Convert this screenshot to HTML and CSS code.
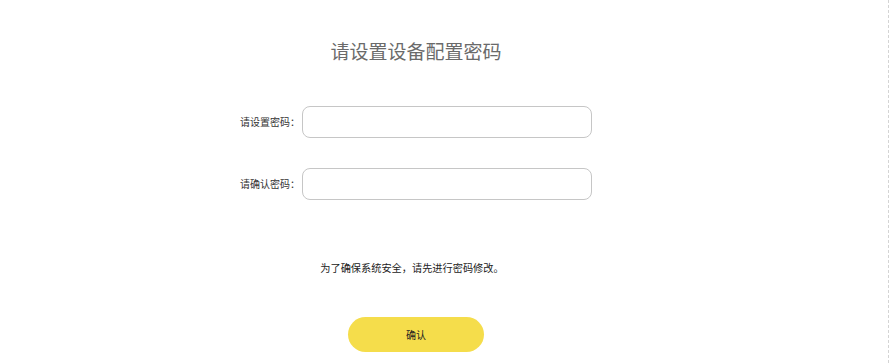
FILE: index.html
```html
<!DOCTYPE html>
<html lang="zh-CN">
<head>
<meta charset="utf-8">
<title>请设置设备配置密码</title>
<link rel="stylesheet" href="styles.css">
</head>
<body>
<div class="page">
  <main class="main">
    <h1 class="title">请设置设备配置密码</h1>
    <form class="form">
      <div class="row">
        <label class="label" for="pwd">请设置密码：</label>
        <input class="input" id="pwd" type="password">
      </div>
      <div class="row">
        <label class="label" for="pwd2">请确认密码：</label>
        <input class="input" id="pwd2" type="password">
      </div>
      <p class="note">为了确保系统安全，请先进行密码修改。</p>
      <button class="btn" type="button">确认</button>
    </form>
  </main>
  <div class="rail"></div>
</div>
</body>
</html>
```
FILE: styles.css
```css
* { box-sizing: border-box; }
html, body { margin: 0; padding: 0; background: #fff; }
body {
  font-family: "Noto Sans CJK SC", "Microsoft YaHei", sans-serif;
  color: #333;
}
.page {
  display: flex;
  justify-content: space-between;
  height: 363px;
}
.main {
  flex: 0 0 832px;
  display: flex;
  flex-direction: column;
  align-items: center;
  padding-top: 39px;
}
.rail {
  flex: 0 0 6px;
  border-left: 1px dashed #d4d4d4;
}
.title {
  margin: 0;
  font-size: 19px;
  line-height: 24px;
  font-weight: normal;
  color: #6a6a6a;
}
.form {
  margin-top: 43px;
  display: flex;
  flex-direction: column;
  align-items: center;
}
.row {
  display: flex;
  align-items: center;
  gap: 2px;
  margin-bottom: 30px;
}
.row:last-of-type { margin-bottom: 0; }
.label {
  font-size: 10px;
  line-height: 14px;
  color: #333;
}
.input {
  width: 290px;
  height: 32px;
  border: 1px solid #c6c6c6;
  border-radius: 8px;
  background: #fff;
  outline: none;
  padding: 0 8px;
}
.note {
  margin: 61px 0 0;
  font-size: 10.2px;
  line-height: 14px;
  color: #222;
  transform: translateX(-4px);
}
.btn {
  margin-top: 42px;
  width: 136px;
  height: 35px;
  border: none;
  border-radius: 18px;
  background: #f5dd4b;
  font-family: inherit;
  font-size: 10px;
  color: #222;
  padding: 0;
}
```
